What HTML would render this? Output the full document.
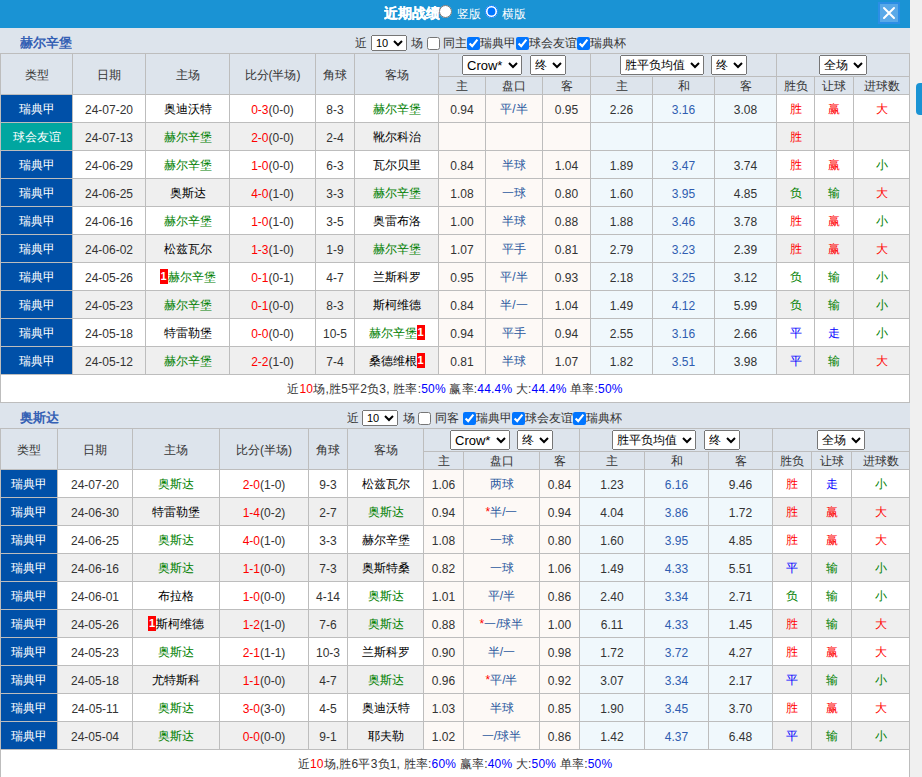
<!DOCTYPE html>
<html><head><meta charset="utf-8"><style>
html,body{margin:0;padding:0;}
body{width:922px;height:777px;overflow:hidden;background:#f0f0f0;position:relative;font-family:"Liberation Sans",sans-serif;font-size:12px;color:#333333;}
div,select,input{position:absolute;}
div{text-align:center;white-space:nowrap;overflow:hidden;}
div span{position:static}
.tn{font-size:13px;font-weight:bold;color:#3460b4;line-height:15px;text-align:left;}
.ct{font-size:12px;line-height:16px;color:#333;text-align:left;}
select{margin:0;font-family:"Liberation Sans",sans-serif;font-size:12px;}
.s10{width:36px;height:16px;padding:0;font-size:11px;}
.sh{height:20px;}
.cb{margin:0;width:13px;height:13px;}
.rc{display:inline-block;background:#f00;color:#fff;font-weight:bold;width:8px;height:15px;line-height:15px;font-size:11px;vertical-align:middle;position:relative;top:-1px;}
.pc{color:#0000ff}
</style></head><body>
<div style="left:0;top:0;width:910px;height:28px;background:#1a93d4"></div>
<div style="left:384px;top:5px;font-size:14px;font-weight:bold;color:#fff;line-height:16px;text-align:left;-webkit-text-stroke:0.3px #fff">近期战绩</div>
<input type="radio" style="left:439px;top:5px;margin:0;width:13px;height:13px" name="v">
<div style="left:457px;top:7px;font-size:12px;color:#fff;line-height:14px;text-align:left">竖版</div>
<input type="radio" checked style="left:485px;top:5px;margin:0;width:13px;height:13px" name="v">
<div style="left:502px;top:7px;font-size:12px;color:#fff;line-height:14px;text-align:left">横版</div>
<div style="left:878px;top:2px;width:22px;height:22px;background:#2b8ee6"></div><div style="left:880px;top:4px;width:18px;height:18px;background:#5aa9e8"></div><svg width="22" height="22" style="position:absolute;left:878px;top:2px"><path d="M6 6 L16 16 M16 6 L6 16" stroke="#fff" stroke-width="2" stroke-linecap="round"/></svg>
<div style="left:916px;top:83px;width:10px;height:32px;background:#1a93d4;border-radius:4px"></div>
<div style="left:0px;top:28px;width:910px;height:25px;background:#dde4ec"></div>
<div class="tn" style="left:20px;top:35px">赫尔辛堡</div>
<div class="ct" style="left:355px;top:35px">近</div>
<select class="s10" style="left:371px;top:35px"><option>10</option></select>
<div class="ct" style="left:411px;top:35px">场</div>
<input type="checkbox" class="cb" style="left:427px;top:37px">
<div class="ct" style="left:443px;top:35px">同主</div>
<input type="checkbox" checked class="cb" style="left:467px;top:37px">
<div class="ct" style="left:480px;top:35px">瑞典甲</div>
<input type="checkbox" checked class="cb" style="left:516px;top:37px">
<div class="ct" style="left:529px;top:35px">球会友谊</div>
<input type="checkbox" checked class="cb" style="left:577px;top:37px">
<div class="ct" style="left:590px;top:35px">瑞典杯</div>
<div style="left:0px;top:53px;width:910px;height:350px;background:#bdbdbd"></div>
<div style="left:1px;top:54px;width:71px;height:40px;background:#dde4ec;line-height:42px;">类型</div>
<div style="left:73px;top:54px;width:72px;height:40px;background:#dde4ec;line-height:42px;">日期</div>
<div style="left:146px;top:54px;width:83px;height:40px;background:#dde4ec;line-height:42px;">主场</div>
<div style="left:230px;top:54px;width:85px;height:40px;background:#dde4ec;line-height:42px;">比分(半场)</div>
<div style="left:316px;top:54px;width:38px;height:40px;background:#dde4ec;line-height:42px;">角球</div>
<div style="left:355px;top:54px;width:83px;height:40px;background:#dde4ec;line-height:42px;">客场</div>
<div style="left:439px;top:54px;width:151px;height:22px;background:#dde4ec;line-height:22px;"></div>
<div style="left:591px;top:54px;width:185px;height:22px;background:#dde4ec;line-height:22px;"></div>
<div style="left:777px;top:54px;width:132px;height:22px;background:#dde4ec;line-height:22px;"></div>
<div style="left:439px;top:77px;width:46px;height:17px;background:#dde4ec;line-height:19px;">主</div>
<div style="left:486px;top:77px;width:56px;height:17px;background:#dde4ec;line-height:19px;">盘口</div>
<div style="left:543px;top:77px;width:47px;height:17px;background:#dde4ec;line-height:19px;">客</div>
<div style="left:591px;top:77px;width:61px;height:17px;background:#dde4ec;line-height:19px;">主</div>
<div style="left:653px;top:77px;width:61px;height:17px;background:#dde4ec;line-height:19px;">和</div>
<div style="left:715px;top:77px;width:61px;height:17px;background:#dde4ec;line-height:19px;">客</div>
<div style="left:777px;top:77px;width:37px;height:17px;background:#dde4ec;line-height:19px;">胜负</div>
<div style="left:815px;top:77px;width:38px;height:17px;background:#dde4ec;line-height:19px;">让球</div>
<div style="left:854px;top:77px;width:55px;height:17px;background:#dde4ec;line-height:19px;">进球数</div>
<select class="sh" style="left:462px;top:55px;width:60px;font-size:13px;"><option>Crow*</option></select>
<select class="sh" style="left:530px;top:55px;width:36px;"><option>终</option></select>
<select class="sh" style="left:620px;top:55px;width:84px;"><option>胜平负均值</option></select>
<select class="sh" style="left:711px;top:55px;width:36px;"><option>终</option></select>
<select class="sh" style="left:819px;top:55px;width:48px;"><option>全场</option></select>
<div style="left:1px;top:95px;width:71px;height:27px;background:#0050a8;line-height:29px;color:#fff">瑞典甲</div>
<div style="left:73px;top:95px;width:72px;height:27px;background:#ffffff;line-height:31px;">24-07-20</div>
<div style="left:146px;top:95px;width:83px;height:27px;background:#ffffff;line-height:29px;"><span style="color:#000">奥迪沃特</span></div>
<div style="left:355px;top:95px;width:83px;height:27px;background:#ffffff;line-height:29px;"><span style="color:#008000">赫尔辛堡</span></div>
<div style="left:230px;top:95px;width:85px;height:27px;background:#ffffff;line-height:31px;"><span style="color:#ff0000">0-3</span>(0-0)</div>
<div style="left:316px;top:95px;width:38px;height:27px;background:#ffffff;line-height:31px;">8-3</div>
<div style="left:439px;top:95px;width:46px;height:27px;background:#fdf9f6;line-height:31px;">0.94</div>
<div style="left:486px;top:95px;width:56px;height:27px;background:#fdf9f6;line-height:29px;color:#2c5aa0">平/半</div>
<div style="left:543px;top:95px;width:47px;height:27px;background:#fdf9f6;line-height:31px;">0.95</div>
<div style="left:591px;top:95px;width:61px;height:27px;background:#f0f8fc;line-height:31px;">2.26</div>
<div style="left:653px;top:95px;width:61px;height:27px;background:#f0f8fc;line-height:31px;color:#2f5db0">3.16</div>
<div style="left:715px;top:95px;width:61px;height:27px;background:#f0f8fc;line-height:31px;">3.08</div>
<div style="left:777px;top:95px;width:37px;height:27px;background:#ffffff;line-height:29px;color:#ff0000">胜</div>
<div style="left:815px;top:95px;width:38px;height:27px;background:#ffffff;line-height:29px;color:#ff0000">赢</div>
<div style="left:854px;top:95px;width:55px;height:27px;background:#ffffff;line-height:29px;color:#ff0000">大</div>
<div style="left:1px;top:123px;width:71px;height:27px;background:#00a6a0;line-height:29px;color:#fff">球会友谊</div>
<div style="left:73px;top:123px;width:72px;height:27px;background:#efefef;line-height:31px;">24-07-13</div>
<div style="left:146px;top:123px;width:83px;height:27px;background:#efefef;line-height:29px;"><span style="color:#008000">赫尔辛堡</span></div>
<div style="left:355px;top:123px;width:83px;height:27px;background:#efefef;line-height:29px;"><span style="color:#000">靴尔科治</span></div>
<div style="left:230px;top:123px;width:85px;height:27px;background:#efefef;line-height:31px;"><span style="color:#ff0000">2-0</span>(0-0)</div>
<div style="left:316px;top:123px;width:38px;height:27px;background:#efefef;line-height:31px;">2-4</div>
<div style="left:439px;top:123px;width:46px;height:27px;background:#fdf9f6;line-height:31px;"></div>
<div style="left:486px;top:123px;width:56px;height:27px;background:#fdf9f6;line-height:29px;color:#2c5aa0"></div>
<div style="left:543px;top:123px;width:47px;height:27px;background:#fdf9f6;line-height:31px;"></div>
<div style="left:591px;top:123px;width:61px;height:27px;background:#f0f8fc;line-height:31px;"></div>
<div style="left:653px;top:123px;width:61px;height:27px;background:#f0f8fc;line-height:31px;color:#2f5db0"></div>
<div style="left:715px;top:123px;width:61px;height:27px;background:#f0f8fc;line-height:31px;"></div>
<div style="left:777px;top:123px;width:37px;height:27px;background:#efefef;line-height:29px;color:#ff0000">胜</div>
<div style="left:815px;top:123px;width:38px;height:27px;background:#efefef;line-height:29px;color:#000"></div>
<div style="left:854px;top:123px;width:55px;height:27px;background:#efefef;line-height:29px;color:#000"></div>
<div style="left:1px;top:151px;width:71px;height:27px;background:#0050a8;line-height:29px;color:#fff">瑞典甲</div>
<div style="left:73px;top:151px;width:72px;height:27px;background:#ffffff;line-height:31px;">24-06-29</div>
<div style="left:146px;top:151px;width:83px;height:27px;background:#ffffff;line-height:29px;"><span style="color:#008000">赫尔辛堡</span></div>
<div style="left:355px;top:151px;width:83px;height:27px;background:#ffffff;line-height:29px;"><span style="color:#000">瓦尔贝里</span></div>
<div style="left:230px;top:151px;width:85px;height:27px;background:#ffffff;line-height:31px;"><span style="color:#ff0000">1-0</span>(0-0)</div>
<div style="left:316px;top:151px;width:38px;height:27px;background:#ffffff;line-height:31px;">6-3</div>
<div style="left:439px;top:151px;width:46px;height:27px;background:#fdf9f6;line-height:31px;">0.84</div>
<div style="left:486px;top:151px;width:56px;height:27px;background:#fdf9f6;line-height:29px;color:#2c5aa0">半球</div>
<div style="left:543px;top:151px;width:47px;height:27px;background:#fdf9f6;line-height:31px;">1.04</div>
<div style="left:591px;top:151px;width:61px;height:27px;background:#f0f8fc;line-height:31px;">1.89</div>
<div style="left:653px;top:151px;width:61px;height:27px;background:#f0f8fc;line-height:31px;color:#2f5db0">3.47</div>
<div style="left:715px;top:151px;width:61px;height:27px;background:#f0f8fc;line-height:31px;">3.74</div>
<div style="left:777px;top:151px;width:37px;height:27px;background:#ffffff;line-height:29px;color:#ff0000">胜</div>
<div style="left:815px;top:151px;width:38px;height:27px;background:#ffffff;line-height:29px;color:#ff0000">赢</div>
<div style="left:854px;top:151px;width:55px;height:27px;background:#ffffff;line-height:29px;color:#008000">小</div>
<div style="left:1px;top:179px;width:71px;height:27px;background:#0050a8;line-height:29px;color:#fff">瑞典甲</div>
<div style="left:73px;top:179px;width:72px;height:27px;background:#efefef;line-height:31px;">24-06-25</div>
<div style="left:146px;top:179px;width:83px;height:27px;background:#efefef;line-height:29px;"><span style="color:#000">奥斯达</span></div>
<div style="left:355px;top:179px;width:83px;height:27px;background:#efefef;line-height:29px;"><span style="color:#008000">赫尔辛堡</span></div>
<div style="left:230px;top:179px;width:85px;height:27px;background:#efefef;line-height:31px;"><span style="color:#ff0000">4-0</span>(1-0)</div>
<div style="left:316px;top:179px;width:38px;height:27px;background:#efefef;line-height:31px;">3-3</div>
<div style="left:439px;top:179px;width:46px;height:27px;background:#fdf9f6;line-height:31px;">1.08</div>
<div style="left:486px;top:179px;width:56px;height:27px;background:#fdf9f6;line-height:29px;color:#2c5aa0">一球</div>
<div style="left:543px;top:179px;width:47px;height:27px;background:#fdf9f6;line-height:31px;">0.80</div>
<div style="left:591px;top:179px;width:61px;height:27px;background:#f0f8fc;line-height:31px;">1.60</div>
<div style="left:653px;top:179px;width:61px;height:27px;background:#f0f8fc;line-height:31px;color:#2f5db0">3.95</div>
<div style="left:715px;top:179px;width:61px;height:27px;background:#f0f8fc;line-height:31px;">4.85</div>
<div style="left:777px;top:179px;width:37px;height:27px;background:#efefef;line-height:29px;color:#008000">负</div>
<div style="left:815px;top:179px;width:38px;height:27px;background:#efefef;line-height:29px;color:#008000">输</div>
<div style="left:854px;top:179px;width:55px;height:27px;background:#efefef;line-height:29px;color:#ff0000">大</div>
<div style="left:1px;top:207px;width:71px;height:27px;background:#0050a8;line-height:29px;color:#fff">瑞典甲</div>
<div style="left:73px;top:207px;width:72px;height:27px;background:#ffffff;line-height:31px;">24-06-16</div>
<div style="left:146px;top:207px;width:83px;height:27px;background:#ffffff;line-height:29px;"><span style="color:#008000">赫尔辛堡</span></div>
<div style="left:355px;top:207px;width:83px;height:27px;background:#ffffff;line-height:29px;"><span style="color:#000">奥雷布洛</span></div>
<div style="left:230px;top:207px;width:85px;height:27px;background:#ffffff;line-height:31px;"><span style="color:#ff0000">1-0</span>(1-0)</div>
<div style="left:316px;top:207px;width:38px;height:27px;background:#ffffff;line-height:31px;">3-5</div>
<div style="left:439px;top:207px;width:46px;height:27px;background:#fdf9f6;line-height:31px;">1.00</div>
<div style="left:486px;top:207px;width:56px;height:27px;background:#fdf9f6;line-height:29px;color:#2c5aa0">半球</div>
<div style="left:543px;top:207px;width:47px;height:27px;background:#fdf9f6;line-height:31px;">0.88</div>
<div style="left:591px;top:207px;width:61px;height:27px;background:#f0f8fc;line-height:31px;">1.88</div>
<div style="left:653px;top:207px;width:61px;height:27px;background:#f0f8fc;line-height:31px;color:#2f5db0">3.46</div>
<div style="left:715px;top:207px;width:61px;height:27px;background:#f0f8fc;line-height:31px;">3.78</div>
<div style="left:777px;top:207px;width:37px;height:27px;background:#ffffff;line-height:29px;color:#ff0000">胜</div>
<div style="left:815px;top:207px;width:38px;height:27px;background:#ffffff;line-height:29px;color:#ff0000">赢</div>
<div style="left:854px;top:207px;width:55px;height:27px;background:#ffffff;line-height:29px;color:#008000">小</div>
<div style="left:1px;top:235px;width:71px;height:27px;background:#0050a8;line-height:29px;color:#fff">瑞典甲</div>
<div style="left:73px;top:235px;width:72px;height:27px;background:#efefef;line-height:31px;">24-06-02</div>
<div style="left:146px;top:235px;width:83px;height:27px;background:#efefef;line-height:29px;"><span style="color:#000">松兹瓦尔</span></div>
<div style="left:355px;top:235px;width:83px;height:27px;background:#efefef;line-height:29px;"><span style="color:#008000">赫尔辛堡</span></div>
<div style="left:230px;top:235px;width:85px;height:27px;background:#efefef;line-height:31px;"><span style="color:#ff0000">1-3</span>(1-0)</div>
<div style="left:316px;top:235px;width:38px;height:27px;background:#efefef;line-height:31px;">1-9</div>
<div style="left:439px;top:235px;width:46px;height:27px;background:#fdf9f6;line-height:31px;">1.07</div>
<div style="left:486px;top:235px;width:56px;height:27px;background:#fdf9f6;line-height:29px;color:#2c5aa0">平手</div>
<div style="left:543px;top:235px;width:47px;height:27px;background:#fdf9f6;line-height:31px;">0.81</div>
<div style="left:591px;top:235px;width:61px;height:27px;background:#f0f8fc;line-height:31px;">2.79</div>
<div style="left:653px;top:235px;width:61px;height:27px;background:#f0f8fc;line-height:31px;color:#2f5db0">3.23</div>
<div style="left:715px;top:235px;width:61px;height:27px;background:#f0f8fc;line-height:31px;">2.39</div>
<div style="left:777px;top:235px;width:37px;height:27px;background:#efefef;line-height:29px;color:#ff0000">胜</div>
<div style="left:815px;top:235px;width:38px;height:27px;background:#efefef;line-height:29px;color:#ff0000">赢</div>
<div style="left:854px;top:235px;width:55px;height:27px;background:#efefef;line-height:29px;color:#ff0000">大</div>
<div style="left:1px;top:263px;width:71px;height:27px;background:#0050a8;line-height:29px;color:#fff">瑞典甲</div>
<div style="left:73px;top:263px;width:72px;height:27px;background:#ffffff;line-height:31px;">24-05-26</div>
<div style="left:146px;top:263px;width:83px;height:27px;background:#ffffff;line-height:29px;"><span class="rc">1</span><span style="color:#008000">赫尔辛堡</span></div>
<div style="left:355px;top:263px;width:83px;height:27px;background:#ffffff;line-height:29px;"><span style="color:#000">兰斯科罗</span></div>
<div style="left:230px;top:263px;width:85px;height:27px;background:#ffffff;line-height:31px;"><span style="color:#ff0000">0-1</span>(0-1)</div>
<div style="left:316px;top:263px;width:38px;height:27px;background:#ffffff;line-height:31px;">4-7</div>
<div style="left:439px;top:263px;width:46px;height:27px;background:#fdf9f6;line-height:31px;">0.95</div>
<div style="left:486px;top:263px;width:56px;height:27px;background:#fdf9f6;line-height:29px;color:#2c5aa0">平/半</div>
<div style="left:543px;top:263px;width:47px;height:27px;background:#fdf9f6;line-height:31px;">0.93</div>
<div style="left:591px;top:263px;width:61px;height:27px;background:#f0f8fc;line-height:31px;">2.18</div>
<div style="left:653px;top:263px;width:61px;height:27px;background:#f0f8fc;line-height:31px;color:#2f5db0">3.25</div>
<div style="left:715px;top:263px;width:61px;height:27px;background:#f0f8fc;line-height:31px;">3.12</div>
<div style="left:777px;top:263px;width:37px;height:27px;background:#ffffff;line-height:29px;color:#008000">负</div>
<div style="left:815px;top:263px;width:38px;height:27px;background:#ffffff;line-height:29px;color:#008000">输</div>
<div style="left:854px;top:263px;width:55px;height:27px;background:#ffffff;line-height:29px;color:#008000">小</div>
<div style="left:1px;top:291px;width:71px;height:27px;background:#0050a8;line-height:29px;color:#fff">瑞典甲</div>
<div style="left:73px;top:291px;width:72px;height:27px;background:#efefef;line-height:31px;">24-05-23</div>
<div style="left:146px;top:291px;width:83px;height:27px;background:#efefef;line-height:29px;"><span style="color:#008000">赫尔辛堡</span></div>
<div style="left:355px;top:291px;width:83px;height:27px;background:#efefef;line-height:29px;"><span style="color:#000">斯柯维德</span></div>
<div style="left:230px;top:291px;width:85px;height:27px;background:#efefef;line-height:31px;"><span style="color:#ff0000">0-1</span>(0-0)</div>
<div style="left:316px;top:291px;width:38px;height:27px;background:#efefef;line-height:31px;">8-3</div>
<div style="left:439px;top:291px;width:46px;height:27px;background:#fdf9f6;line-height:31px;">0.84</div>
<div style="left:486px;top:291px;width:56px;height:27px;background:#fdf9f6;line-height:29px;color:#2c5aa0">半/一</div>
<div style="left:543px;top:291px;width:47px;height:27px;background:#fdf9f6;line-height:31px;">1.04</div>
<div style="left:591px;top:291px;width:61px;height:27px;background:#f0f8fc;line-height:31px;">1.49</div>
<div style="left:653px;top:291px;width:61px;height:27px;background:#f0f8fc;line-height:31px;color:#2f5db0">4.12</div>
<div style="left:715px;top:291px;width:61px;height:27px;background:#f0f8fc;line-height:31px;">5.99</div>
<div style="left:777px;top:291px;width:37px;height:27px;background:#efefef;line-height:29px;color:#008000">负</div>
<div style="left:815px;top:291px;width:38px;height:27px;background:#efefef;line-height:29px;color:#008000">输</div>
<div style="left:854px;top:291px;width:55px;height:27px;background:#efefef;line-height:29px;color:#008000">小</div>
<div style="left:1px;top:319px;width:71px;height:27px;background:#0050a8;line-height:29px;color:#fff">瑞典甲</div>
<div style="left:73px;top:319px;width:72px;height:27px;background:#ffffff;line-height:31px;">24-05-18</div>
<div style="left:146px;top:319px;width:83px;height:27px;background:#ffffff;line-height:29px;"><span style="color:#000">特雷勒堡</span></div>
<div style="left:355px;top:319px;width:83px;height:27px;background:#ffffff;line-height:29px;"><span style="color:#008000">赫尔辛堡</span><span class="rc">1</span></div>
<div style="left:230px;top:319px;width:85px;height:27px;background:#ffffff;line-height:31px;"><span style="color:#ff0000">0-0</span>(0-0)</div>
<div style="left:316px;top:319px;width:38px;height:27px;background:#ffffff;line-height:31px;">10-5</div>
<div style="left:439px;top:319px;width:46px;height:27px;background:#fdf9f6;line-height:31px;">0.94</div>
<div style="left:486px;top:319px;width:56px;height:27px;background:#fdf9f6;line-height:29px;color:#2c5aa0">平手</div>
<div style="left:543px;top:319px;width:47px;height:27px;background:#fdf9f6;line-height:31px;">0.94</div>
<div style="left:591px;top:319px;width:61px;height:27px;background:#f0f8fc;line-height:31px;">2.55</div>
<div style="left:653px;top:319px;width:61px;height:27px;background:#f0f8fc;line-height:31px;color:#2f5db0">3.16</div>
<div style="left:715px;top:319px;width:61px;height:27px;background:#f0f8fc;line-height:31px;">2.66</div>
<div style="left:777px;top:319px;width:37px;height:27px;background:#ffffff;line-height:29px;color:#0000ff">平</div>
<div style="left:815px;top:319px;width:38px;height:27px;background:#ffffff;line-height:29px;color:#0000ff">走</div>
<div style="left:854px;top:319px;width:55px;height:27px;background:#ffffff;line-height:29px;color:#008000">小</div>
<div style="left:1px;top:347px;width:71px;height:27px;background:#0050a8;line-height:29px;color:#fff">瑞典甲</div>
<div style="left:73px;top:347px;width:72px;height:27px;background:#efefef;line-height:31px;">24-05-12</div>
<div style="left:146px;top:347px;width:83px;height:27px;background:#efefef;line-height:29px;"><span style="color:#008000">赫尔辛堡</span></div>
<div style="left:355px;top:347px;width:83px;height:27px;background:#efefef;line-height:29px;"><span style="color:#000">桑德维根</span><span class="rc">1</span></div>
<div style="left:230px;top:347px;width:85px;height:27px;background:#efefef;line-height:31px;"><span style="color:#ff0000">2-2</span>(1-0)</div>
<div style="left:316px;top:347px;width:38px;height:27px;background:#efefef;line-height:31px;">7-4</div>
<div style="left:439px;top:347px;width:46px;height:27px;background:#fdf9f6;line-height:31px;">0.81</div>
<div style="left:486px;top:347px;width:56px;height:27px;background:#fdf9f6;line-height:29px;color:#2c5aa0">半球</div>
<div style="left:543px;top:347px;width:47px;height:27px;background:#fdf9f6;line-height:31px;">1.07</div>
<div style="left:591px;top:347px;width:61px;height:27px;background:#f0f8fc;line-height:31px;">1.82</div>
<div style="left:653px;top:347px;width:61px;height:27px;background:#f0f8fc;line-height:31px;color:#2f5db0">3.51</div>
<div style="left:715px;top:347px;width:61px;height:27px;background:#f0f8fc;line-height:31px;">3.98</div>
<div style="left:777px;top:347px;width:37px;height:27px;background:#efefef;line-height:29px;color:#0000ff">平</div>
<div style="left:815px;top:347px;width:38px;height:27px;background:#efefef;line-height:29px;color:#008000">输</div>
<div style="left:854px;top:347px;width:55px;height:27px;background:#efefef;line-height:29px;color:#ff0000">大</div>
<div style="left:1px;top:375px;width:908px;height:27px;background:#fff;line-height:29px;letter-spacing:0.2px">近<span style="color:#ff0000">10</span>场,胜5平2负3, 胜率:<span class="pc">50%</span> 赢率:<span class="pc">44.4%</span> 大:<span class="pc">44.4%</span> 单率:<span class="pc">50%</span></div>
<div style="left:0px;top:403px;width:910px;height:25px;background:#dde4ec"></div>
<div class="tn" style="left:20px;top:410px">奥斯达</div>
<div class="ct" style="left:347px;top:410px">近</div>
<select class="s10" style="left:362px;top:410px"><option>10</option></select>
<div class="ct" style="left:403px;top:410px">场</div>
<input type="checkbox" class="cb" style="left:418px;top:412px">
<div class="ct" style="left:435px;top:410px">同客</div>
<input type="checkbox" checked class="cb" style="left:463px;top:412px">
<div class="ct" style="left:476px;top:410px">瑞典甲</div>
<input type="checkbox" checked class="cb" style="left:512px;top:412px">
<div class="ct" style="left:525px;top:410px">球会友谊</div>
<input type="checkbox" checked class="cb" style="left:573px;top:412px">
<div class="ct" style="left:586px;top:410px">瑞典杯</div>
<div style="left:0px;top:428px;width:910px;height:350px;background:#bdbdbd"></div>
<div style="left:1px;top:429px;width:56px;height:40px;background:#dde4ec;line-height:42px;">类型</div>
<div style="left:58px;top:429px;width:74px;height:40px;background:#dde4ec;line-height:42px;">日期</div>
<div style="left:133px;top:429px;width:86px;height:40px;background:#dde4ec;line-height:42px;">主场</div>
<div style="left:220px;top:429px;width:88px;height:40px;background:#dde4ec;line-height:42px;">比分(半场)</div>
<div style="left:309px;top:429px;width:38px;height:40px;background:#dde4ec;line-height:42px;">角球</div>
<div style="left:348px;top:429px;width:75px;height:40px;background:#dde4ec;line-height:42px;">客场</div>
<div style="left:424px;top:429px;width:155px;height:22px;background:#dde4ec;line-height:22px;"></div>
<div style="left:580px;top:429px;width:192px;height:22px;background:#dde4ec;line-height:22px;"></div>
<div style="left:773px;top:429px;width:136px;height:22px;background:#dde4ec;line-height:22px;"></div>
<div style="left:424px;top:452px;width:39px;height:17px;background:#dde4ec;line-height:19px;">主</div>
<div style="left:464px;top:452px;width:75px;height:17px;background:#dde4ec;line-height:19px;">盘口</div>
<div style="left:540px;top:452px;width:39px;height:17px;background:#dde4ec;line-height:19px;">客</div>
<div style="left:580px;top:452px;width:64px;height:17px;background:#dde4ec;line-height:19px;">主</div>
<div style="left:645px;top:452px;width:63px;height:17px;background:#dde4ec;line-height:19px;">和</div>
<div style="left:709px;top:452px;width:63px;height:17px;background:#dde4ec;line-height:19px;">客</div>
<div style="left:773px;top:452px;width:38px;height:17px;background:#dde4ec;line-height:19px;">胜负</div>
<div style="left:812px;top:452px;width:39px;height:17px;background:#dde4ec;line-height:19px;">让球</div>
<div style="left:852px;top:452px;width:57px;height:17px;background:#dde4ec;line-height:19px;">进球数</div>
<select class="sh" style="left:450px;top:430px;width:60px;font-size:13px;"><option>Crow*</option></select>
<select class="sh" style="left:517px;top:430px;width:36px;"><option>终</option></select>
<select class="sh" style="left:612px;top:430px;width:84px;"><option>胜平负均值</option></select>
<select class="sh" style="left:704px;top:430px;width:36px;"><option>终</option></select>
<select class="sh" style="left:817px;top:430px;width:48px;"><option>全场</option></select>
<div style="left:1px;top:470px;width:56px;height:27px;background:#0050a8;line-height:29px;color:#fff">瑞典甲</div>
<div style="left:58px;top:470px;width:74px;height:27px;background:#ffffff;line-height:31px;">24-07-20</div>
<div style="left:133px;top:470px;width:86px;height:27px;background:#ffffff;line-height:29px;"><span style="color:#008000">奥斯达</span></div>
<div style="left:348px;top:470px;width:75px;height:27px;background:#ffffff;line-height:29px;"><span style="color:#000">松兹瓦尔</span></div>
<div style="left:220px;top:470px;width:88px;height:27px;background:#ffffff;line-height:31px;"><span style="color:#ff0000">2-0</span>(1-0)</div>
<div style="left:309px;top:470px;width:38px;height:27px;background:#ffffff;line-height:31px;">9-3</div>
<div style="left:424px;top:470px;width:39px;height:27px;background:#fdf9f6;line-height:31px;">1.06</div>
<div style="left:464px;top:470px;width:75px;height:27px;background:#fdf9f6;line-height:29px;color:#2c5aa0">两球</div>
<div style="left:540px;top:470px;width:39px;height:27px;background:#fdf9f6;line-height:31px;">0.84</div>
<div style="left:580px;top:470px;width:64px;height:27px;background:#f0f8fc;line-height:31px;">1.23</div>
<div style="left:645px;top:470px;width:63px;height:27px;background:#f0f8fc;line-height:31px;color:#2f5db0">6.16</div>
<div style="left:709px;top:470px;width:63px;height:27px;background:#f0f8fc;line-height:31px;">9.46</div>
<div style="left:773px;top:470px;width:38px;height:27px;background:#ffffff;line-height:29px;color:#ff0000">胜</div>
<div style="left:812px;top:470px;width:39px;height:27px;background:#ffffff;line-height:29px;color:#0000ff">走</div>
<div style="left:852px;top:470px;width:57px;height:27px;background:#ffffff;line-height:29px;color:#008000">小</div>
<div style="left:1px;top:498px;width:56px;height:27px;background:#0050a8;line-height:29px;color:#fff">瑞典甲</div>
<div style="left:58px;top:498px;width:74px;height:27px;background:#efefef;line-height:31px;">24-06-30</div>
<div style="left:133px;top:498px;width:86px;height:27px;background:#efefef;line-height:29px;"><span style="color:#000">特雷勒堡</span></div>
<div style="left:348px;top:498px;width:75px;height:27px;background:#efefef;line-height:29px;"><span style="color:#008000">奥斯达</span></div>
<div style="left:220px;top:498px;width:88px;height:27px;background:#efefef;line-height:31px;"><span style="color:#ff0000">1-4</span>(0-2)</div>
<div style="left:309px;top:498px;width:38px;height:27px;background:#efefef;line-height:31px;">2-7</div>
<div style="left:424px;top:498px;width:39px;height:27px;background:#fdf9f6;line-height:31px;">0.94</div>
<div style="left:464px;top:498px;width:75px;height:27px;background:#fdf9f6;line-height:29px;color:#2c5aa0"><span style="color:#ff0000">*</span>半/一</div>
<div style="left:540px;top:498px;width:39px;height:27px;background:#fdf9f6;line-height:31px;">0.94</div>
<div style="left:580px;top:498px;width:64px;height:27px;background:#f0f8fc;line-height:31px;">4.04</div>
<div style="left:645px;top:498px;width:63px;height:27px;background:#f0f8fc;line-height:31px;color:#2f5db0">3.86</div>
<div style="left:709px;top:498px;width:63px;height:27px;background:#f0f8fc;line-height:31px;">1.72</div>
<div style="left:773px;top:498px;width:38px;height:27px;background:#efefef;line-height:29px;color:#ff0000">胜</div>
<div style="left:812px;top:498px;width:39px;height:27px;background:#efefef;line-height:29px;color:#ff0000">赢</div>
<div style="left:852px;top:498px;width:57px;height:27px;background:#efefef;line-height:29px;color:#ff0000">大</div>
<div style="left:1px;top:526px;width:56px;height:27px;background:#0050a8;line-height:29px;color:#fff">瑞典甲</div>
<div style="left:58px;top:526px;width:74px;height:27px;background:#ffffff;line-height:31px;">24-06-25</div>
<div style="left:133px;top:526px;width:86px;height:27px;background:#ffffff;line-height:29px;"><span style="color:#008000">奥斯达</span></div>
<div style="left:348px;top:526px;width:75px;height:27px;background:#ffffff;line-height:29px;"><span style="color:#000">赫尔辛堡</span></div>
<div style="left:220px;top:526px;width:88px;height:27px;background:#ffffff;line-height:31px;"><span style="color:#ff0000">4-0</span>(1-0)</div>
<div style="left:309px;top:526px;width:38px;height:27px;background:#ffffff;line-height:31px;">3-3</div>
<div style="left:424px;top:526px;width:39px;height:27px;background:#fdf9f6;line-height:31px;">1.08</div>
<div style="left:464px;top:526px;width:75px;height:27px;background:#fdf9f6;line-height:29px;color:#2c5aa0">一球</div>
<div style="left:540px;top:526px;width:39px;height:27px;background:#fdf9f6;line-height:31px;">0.80</div>
<div style="left:580px;top:526px;width:64px;height:27px;background:#f0f8fc;line-height:31px;">1.60</div>
<div style="left:645px;top:526px;width:63px;height:27px;background:#f0f8fc;line-height:31px;color:#2f5db0">3.95</div>
<div style="left:709px;top:526px;width:63px;height:27px;background:#f0f8fc;line-height:31px;">4.85</div>
<div style="left:773px;top:526px;width:38px;height:27px;background:#ffffff;line-height:29px;color:#ff0000">胜</div>
<div style="left:812px;top:526px;width:39px;height:27px;background:#ffffff;line-height:29px;color:#ff0000">赢</div>
<div style="left:852px;top:526px;width:57px;height:27px;background:#ffffff;line-height:29px;color:#ff0000">大</div>
<div style="left:1px;top:554px;width:56px;height:27px;background:#0050a8;line-height:29px;color:#fff">瑞典甲</div>
<div style="left:58px;top:554px;width:74px;height:27px;background:#efefef;line-height:31px;">24-06-16</div>
<div style="left:133px;top:554px;width:86px;height:27px;background:#efefef;line-height:29px;"><span style="color:#008000">奥斯达</span></div>
<div style="left:348px;top:554px;width:75px;height:27px;background:#efefef;line-height:29px;"><span style="color:#000">奥斯特桑</span></div>
<div style="left:220px;top:554px;width:88px;height:27px;background:#efefef;line-height:31px;"><span style="color:#ff0000">1-1</span>(0-0)</div>
<div style="left:309px;top:554px;width:38px;height:27px;background:#efefef;line-height:31px;">7-3</div>
<div style="left:424px;top:554px;width:39px;height:27px;background:#fdf9f6;line-height:31px;">0.82</div>
<div style="left:464px;top:554px;width:75px;height:27px;background:#fdf9f6;line-height:29px;color:#2c5aa0">一球</div>
<div style="left:540px;top:554px;width:39px;height:27px;background:#fdf9f6;line-height:31px;">1.06</div>
<div style="left:580px;top:554px;width:64px;height:27px;background:#f0f8fc;line-height:31px;">1.49</div>
<div style="left:645px;top:554px;width:63px;height:27px;background:#f0f8fc;line-height:31px;color:#2f5db0">4.33</div>
<div style="left:709px;top:554px;width:63px;height:27px;background:#f0f8fc;line-height:31px;">5.51</div>
<div style="left:773px;top:554px;width:38px;height:27px;background:#efefef;line-height:29px;color:#0000ff">平</div>
<div style="left:812px;top:554px;width:39px;height:27px;background:#efefef;line-height:29px;color:#008000">输</div>
<div style="left:852px;top:554px;width:57px;height:27px;background:#efefef;line-height:29px;color:#008000">小</div>
<div style="left:1px;top:582px;width:56px;height:27px;background:#0050a8;line-height:29px;color:#fff">瑞典甲</div>
<div style="left:58px;top:582px;width:74px;height:27px;background:#ffffff;line-height:31px;">24-06-01</div>
<div style="left:133px;top:582px;width:86px;height:27px;background:#ffffff;line-height:29px;"><span style="color:#000">布拉格</span></div>
<div style="left:348px;top:582px;width:75px;height:27px;background:#ffffff;line-height:29px;"><span style="color:#008000">奥斯达</span></div>
<div style="left:220px;top:582px;width:88px;height:27px;background:#ffffff;line-height:31px;"><span style="color:#ff0000">1-0</span>(0-0)</div>
<div style="left:309px;top:582px;width:38px;height:27px;background:#ffffff;line-height:31px;">4-14</div>
<div style="left:424px;top:582px;width:39px;height:27px;background:#fdf9f6;line-height:31px;">1.01</div>
<div style="left:464px;top:582px;width:75px;height:27px;background:#fdf9f6;line-height:29px;color:#2c5aa0">平/半</div>
<div style="left:540px;top:582px;width:39px;height:27px;background:#fdf9f6;line-height:31px;">0.86</div>
<div style="left:580px;top:582px;width:64px;height:27px;background:#f0f8fc;line-height:31px;">2.40</div>
<div style="left:645px;top:582px;width:63px;height:27px;background:#f0f8fc;line-height:31px;color:#2f5db0">3.34</div>
<div style="left:709px;top:582px;width:63px;height:27px;background:#f0f8fc;line-height:31px;">2.71</div>
<div style="left:773px;top:582px;width:38px;height:27px;background:#ffffff;line-height:29px;color:#008000">负</div>
<div style="left:812px;top:582px;width:39px;height:27px;background:#ffffff;line-height:29px;color:#008000">输</div>
<div style="left:852px;top:582px;width:57px;height:27px;background:#ffffff;line-height:29px;color:#008000">小</div>
<div style="left:1px;top:610px;width:56px;height:27px;background:#0050a8;line-height:29px;color:#fff">瑞典甲</div>
<div style="left:58px;top:610px;width:74px;height:27px;background:#efefef;line-height:31px;">24-05-26</div>
<div style="left:133px;top:610px;width:86px;height:27px;background:#efefef;line-height:29px;"><span class="rc">1</span><span style="color:#000">斯柯维德</span></div>
<div style="left:348px;top:610px;width:75px;height:27px;background:#efefef;line-height:29px;"><span style="color:#008000">奥斯达</span></div>
<div style="left:220px;top:610px;width:88px;height:27px;background:#efefef;line-height:31px;"><span style="color:#ff0000">1-2</span>(1-0)</div>
<div style="left:309px;top:610px;width:38px;height:27px;background:#efefef;line-height:31px;">7-6</div>
<div style="left:424px;top:610px;width:39px;height:27px;background:#fdf9f6;line-height:31px;">0.88</div>
<div style="left:464px;top:610px;width:75px;height:27px;background:#fdf9f6;line-height:29px;color:#2c5aa0"><span style="color:#ff0000">*</span>一/球半</div>
<div style="left:540px;top:610px;width:39px;height:27px;background:#fdf9f6;line-height:31px;">1.00</div>
<div style="left:580px;top:610px;width:64px;height:27px;background:#f0f8fc;line-height:31px;">6.11</div>
<div style="left:645px;top:610px;width:63px;height:27px;background:#f0f8fc;line-height:31px;color:#2f5db0">4.33</div>
<div style="left:709px;top:610px;width:63px;height:27px;background:#f0f8fc;line-height:31px;">1.45</div>
<div style="left:773px;top:610px;width:38px;height:27px;background:#efefef;line-height:29px;color:#ff0000">胜</div>
<div style="left:812px;top:610px;width:39px;height:27px;background:#efefef;line-height:29px;color:#008000">输</div>
<div style="left:852px;top:610px;width:57px;height:27px;background:#efefef;line-height:29px;color:#ff0000">大</div>
<div style="left:1px;top:638px;width:56px;height:27px;background:#0050a8;line-height:29px;color:#fff">瑞典甲</div>
<div style="left:58px;top:638px;width:74px;height:27px;background:#ffffff;line-height:31px;">24-05-23</div>
<div style="left:133px;top:638px;width:86px;height:27px;background:#ffffff;line-height:29px;"><span style="color:#008000">奥斯达</span></div>
<div style="left:348px;top:638px;width:75px;height:27px;background:#ffffff;line-height:29px;"><span style="color:#000">兰斯科罗</span></div>
<div style="left:220px;top:638px;width:88px;height:27px;background:#ffffff;line-height:31px;"><span style="color:#ff0000">2-1</span>(1-1)</div>
<div style="left:309px;top:638px;width:38px;height:27px;background:#ffffff;line-height:31px;">10-3</div>
<div style="left:424px;top:638px;width:39px;height:27px;background:#fdf9f6;line-height:31px;">0.90</div>
<div style="left:464px;top:638px;width:75px;height:27px;background:#fdf9f6;line-height:29px;color:#2c5aa0">半/一</div>
<div style="left:540px;top:638px;width:39px;height:27px;background:#fdf9f6;line-height:31px;">0.98</div>
<div style="left:580px;top:638px;width:64px;height:27px;background:#f0f8fc;line-height:31px;">1.72</div>
<div style="left:645px;top:638px;width:63px;height:27px;background:#f0f8fc;line-height:31px;color:#2f5db0">3.72</div>
<div style="left:709px;top:638px;width:63px;height:27px;background:#f0f8fc;line-height:31px;">4.27</div>
<div style="left:773px;top:638px;width:38px;height:27px;background:#ffffff;line-height:29px;color:#ff0000">胜</div>
<div style="left:812px;top:638px;width:39px;height:27px;background:#ffffff;line-height:29px;color:#ff0000">赢</div>
<div style="left:852px;top:638px;width:57px;height:27px;background:#ffffff;line-height:29px;color:#ff0000">大</div>
<div style="left:1px;top:666px;width:56px;height:27px;background:#0050a8;line-height:29px;color:#fff">瑞典甲</div>
<div style="left:58px;top:666px;width:74px;height:27px;background:#efefef;line-height:31px;">24-05-18</div>
<div style="left:133px;top:666px;width:86px;height:27px;background:#efefef;line-height:29px;"><span style="color:#000">尤特斯科</span></div>
<div style="left:348px;top:666px;width:75px;height:27px;background:#efefef;line-height:29px;"><span style="color:#008000">奥斯达</span></div>
<div style="left:220px;top:666px;width:88px;height:27px;background:#efefef;line-height:31px;"><span style="color:#ff0000">1-1</span>(0-0)</div>
<div style="left:309px;top:666px;width:38px;height:27px;background:#efefef;line-height:31px;">4-7</div>
<div style="left:424px;top:666px;width:39px;height:27px;background:#fdf9f6;line-height:31px;">0.96</div>
<div style="left:464px;top:666px;width:75px;height:27px;background:#fdf9f6;line-height:29px;color:#2c5aa0"><span style="color:#ff0000">*</span>平/半</div>
<div style="left:540px;top:666px;width:39px;height:27px;background:#fdf9f6;line-height:31px;">0.92</div>
<div style="left:580px;top:666px;width:64px;height:27px;background:#f0f8fc;line-height:31px;">3.07</div>
<div style="left:645px;top:666px;width:63px;height:27px;background:#f0f8fc;line-height:31px;color:#2f5db0">3.34</div>
<div style="left:709px;top:666px;width:63px;height:27px;background:#f0f8fc;line-height:31px;">2.17</div>
<div style="left:773px;top:666px;width:38px;height:27px;background:#efefef;line-height:29px;color:#0000ff">平</div>
<div style="left:812px;top:666px;width:39px;height:27px;background:#efefef;line-height:29px;color:#008000">输</div>
<div style="left:852px;top:666px;width:57px;height:27px;background:#efefef;line-height:29px;color:#008000">小</div>
<div style="left:1px;top:694px;width:56px;height:27px;background:#0050a8;line-height:29px;color:#fff">瑞典甲</div>
<div style="left:58px;top:694px;width:74px;height:27px;background:#ffffff;line-height:31px;">24-05-11</div>
<div style="left:133px;top:694px;width:86px;height:27px;background:#ffffff;line-height:29px;"><span style="color:#008000">奥斯达</span></div>
<div style="left:348px;top:694px;width:75px;height:27px;background:#ffffff;line-height:29px;"><span style="color:#000">奥迪沃特</span></div>
<div style="left:220px;top:694px;width:88px;height:27px;background:#ffffff;line-height:31px;"><span style="color:#ff0000">3-0</span>(3-0)</div>
<div style="left:309px;top:694px;width:38px;height:27px;background:#ffffff;line-height:31px;">4-5</div>
<div style="left:424px;top:694px;width:39px;height:27px;background:#fdf9f6;line-height:31px;">1.03</div>
<div style="left:464px;top:694px;width:75px;height:27px;background:#fdf9f6;line-height:29px;color:#2c5aa0">半球</div>
<div style="left:540px;top:694px;width:39px;height:27px;background:#fdf9f6;line-height:31px;">0.85</div>
<div style="left:580px;top:694px;width:64px;height:27px;background:#f0f8fc;line-height:31px;">1.90</div>
<div style="left:645px;top:694px;width:63px;height:27px;background:#f0f8fc;line-height:31px;color:#2f5db0">3.45</div>
<div style="left:709px;top:694px;width:63px;height:27px;background:#f0f8fc;line-height:31px;">3.70</div>
<div style="left:773px;top:694px;width:38px;height:27px;background:#ffffff;line-height:29px;color:#ff0000">胜</div>
<div style="left:812px;top:694px;width:39px;height:27px;background:#ffffff;line-height:29px;color:#ff0000">赢</div>
<div style="left:852px;top:694px;width:57px;height:27px;background:#ffffff;line-height:29px;color:#ff0000">大</div>
<div style="left:1px;top:722px;width:56px;height:27px;background:#0050a8;line-height:29px;color:#fff">瑞典甲</div>
<div style="left:58px;top:722px;width:74px;height:27px;background:#efefef;line-height:31px;">24-05-04</div>
<div style="left:133px;top:722px;width:86px;height:27px;background:#efefef;line-height:29px;"><span style="color:#008000">奥斯达</span></div>
<div style="left:348px;top:722px;width:75px;height:27px;background:#efefef;line-height:29px;"><span style="color:#000">耶夫勒</span></div>
<div style="left:220px;top:722px;width:88px;height:27px;background:#efefef;line-height:31px;"><span style="color:#ff0000">0-0</span>(0-0)</div>
<div style="left:309px;top:722px;width:38px;height:27px;background:#efefef;line-height:31px;">9-1</div>
<div style="left:424px;top:722px;width:39px;height:27px;background:#fdf9f6;line-height:31px;">1.02</div>
<div style="left:464px;top:722px;width:75px;height:27px;background:#fdf9f6;line-height:29px;color:#2c5aa0">一/球半</div>
<div style="left:540px;top:722px;width:39px;height:27px;background:#fdf9f6;line-height:31px;">0.86</div>
<div style="left:580px;top:722px;width:64px;height:27px;background:#f0f8fc;line-height:31px;">1.42</div>
<div style="left:645px;top:722px;width:63px;height:27px;background:#f0f8fc;line-height:31px;color:#2f5db0">4.37</div>
<div style="left:709px;top:722px;width:63px;height:27px;background:#f0f8fc;line-height:31px;">6.48</div>
<div style="left:773px;top:722px;width:38px;height:27px;background:#efefef;line-height:29px;color:#0000ff">平</div>
<div style="left:812px;top:722px;width:39px;height:27px;background:#efefef;line-height:29px;color:#008000">输</div>
<div style="left:852px;top:722px;width:57px;height:27px;background:#efefef;line-height:29px;color:#008000">小</div>
<div style="left:1px;top:750px;width:908px;height:27px;background:#fff;line-height:29px;letter-spacing:0.2px">近<span style="color:#ff0000">10</span>场,胜6平3负1, 胜率:<span class="pc">60%</span> 赢率:<span class="pc">40%</span> 大:<span class="pc">50%</span> 单率:<span class="pc">50%</span></div>
</body></html>
